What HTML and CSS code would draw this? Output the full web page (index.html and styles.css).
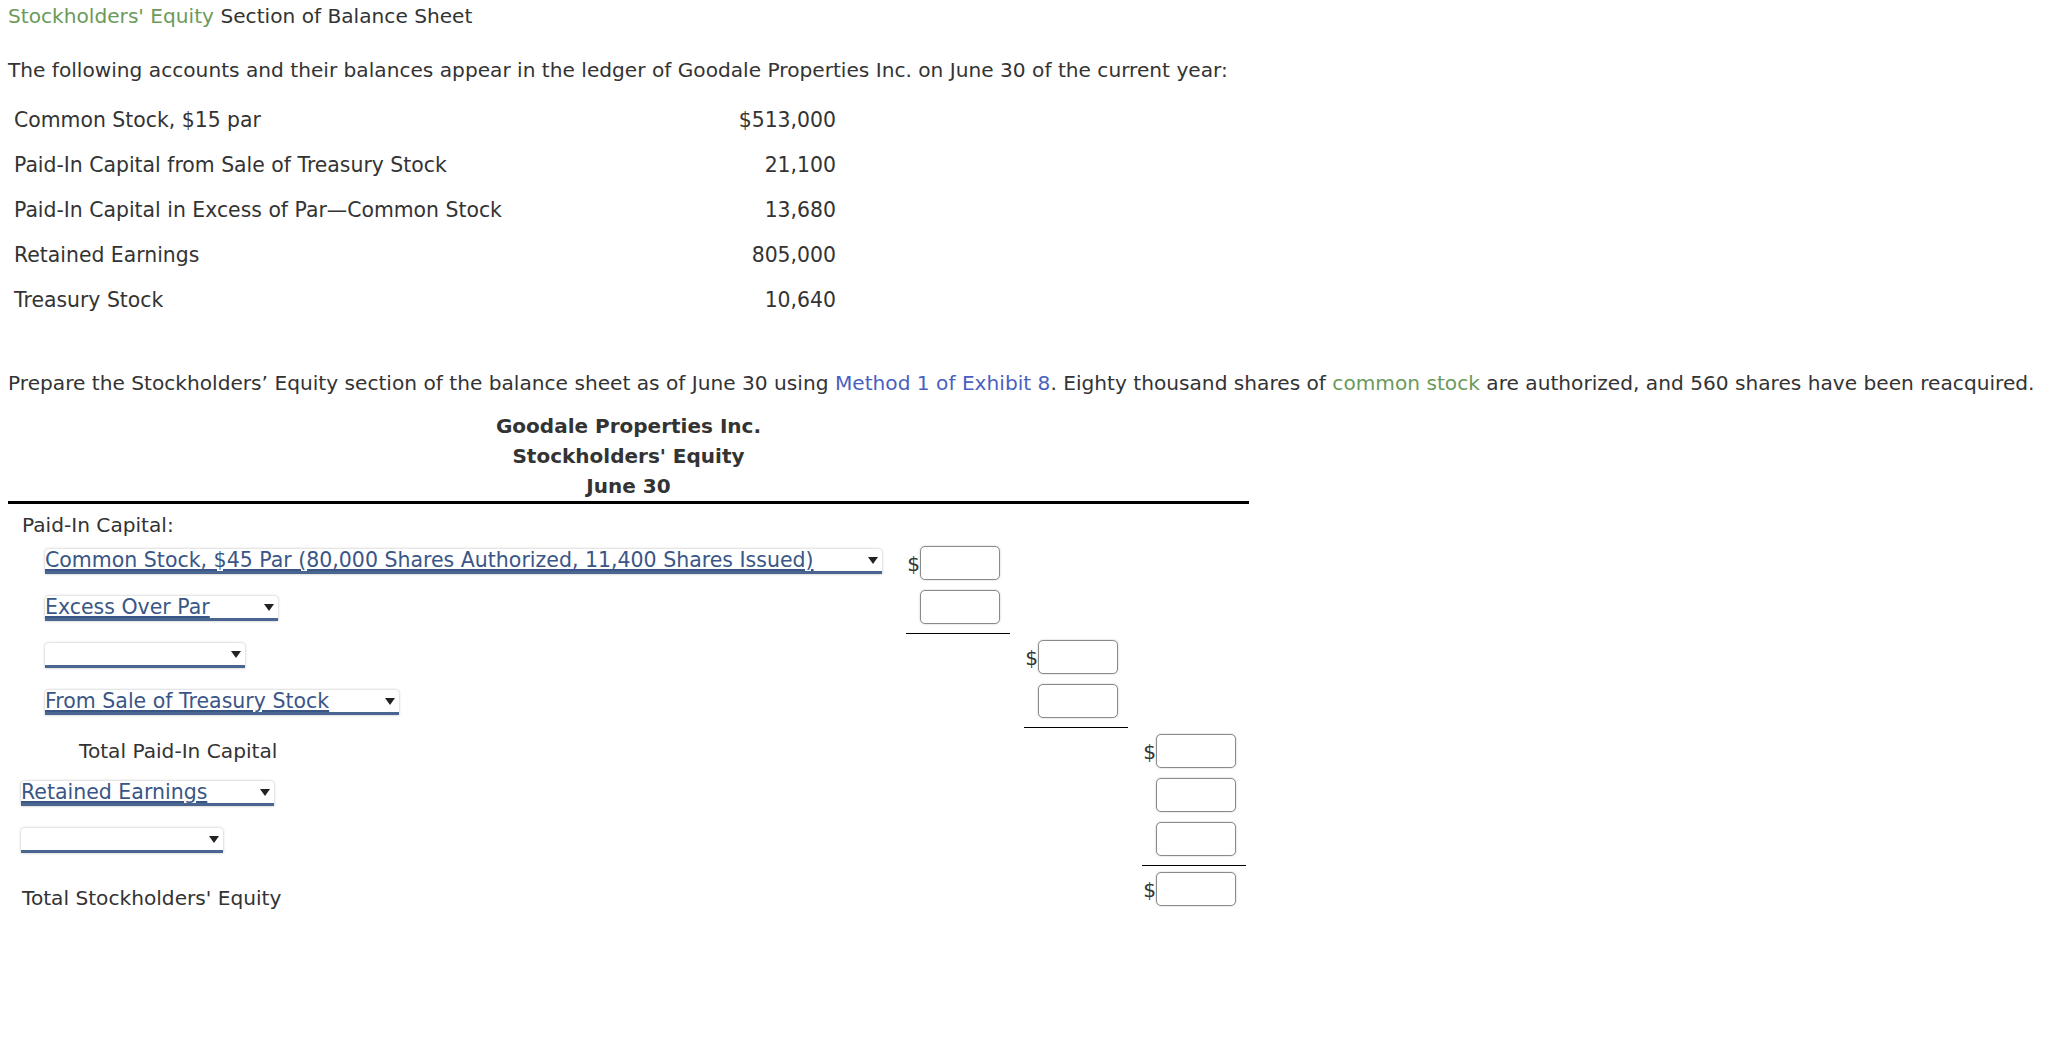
FILE: index.html
```html
<!DOCTYPE html>
<html lang="en">
<head>
<meta charset="utf-8">
<title>Stockholders' Equity Section of Balance Sheet</title>
<link rel="stylesheet" href="styles.css">
</head>
<body>
<div class="page">
  <div class="title"><span class="green">Stockholders' Equity</span> Section of Balance Sheet</div>
  <p class="intro">The following accounts and their balances appear in the ledger of Goodale Properties Inc. on June 30 of the current year:</p>
  <div class="ledger">
    <div class="lrow"><span>Common Stock, $15 par</span><span>$513,000</span></div>
    <div class="lrow"><span>Paid-In Capital from Sale of Treasury Stock</span><span>21,100</span></div>
    <div class="lrow"><span>Paid-In Capital in Excess of Par—Common Stock</span><span>13,680</span></div>
    <div class="lrow"><span>Retained Earnings</span><span>805,000</span></div>
    <div class="lrow"><span>Treasury Stock</span><span>10,640</span></div>
  </div>
  <p class="prompt">Prepare the Stockholders’ Equity section of the balance sheet as of June 30 using <span class="blue">Method 1 of Exhibit 8</span>. Eighty thousand shares of <span class="green">common stock</span> are authorized, and 560 shares have been reacquired.</p>

  <div class="sheet">
    <div class="sheet-head">
      <div>Goodale Properties Inc.</div>
      <div>Stockholders' Equity</div>
      <div>June 30</div>
    </div>
    <div class="section">Paid-In Capital:</div>

    <div class="row">
      <div class="label ind2"><span class="dd dd-cs"><span class="dd-text">Common Stock, $45 Par (80,000 Shares Authorized, 11,400 Shares Issued)</span><svg class="arrow" viewBox="0 0 10 7" width="10" height="7"><path d="M0 0H10L5 7Z"/></svg></span></div>
      <div class="amt"><div class="cell"><span class="cur">$</span><span class="box"></span></div></div>
      <div class="amt"></div>
      <div class="amt"></div>
    </div>

    <div class="row tall">
      <div class="label ind2"><span class="dd dd-ex"><span class="dd-text">Excess Over Par</span><svg class="arrow" viewBox="0 0 10 7" width="10" height="7"><path d="M0 0H10L5 7Z"/></svg></span></div>
      <div class="amt"><div class="cell ul"><span class="cur"></span><span class="box"></span></div></div>
      <div class="amt"></div>
      <div class="amt"></div>
    </div>

    <div class="row">
      <div class="label ind2"><span class="dd dd-b1"><span class="dd-text"></span><svg class="arrow" viewBox="0 0 10 7" width="10" height="7"><path d="M0 0H10L5 7Z"/></svg></span></div>
      <div class="amt"></div>
      <div class="amt"><div class="cell"><span class="cur">$</span><span class="box"></span></div></div>
      <div class="amt"></div>
    </div>

    <div class="row tall">
      <div class="label ind2"><span class="dd dd-ts"><span class="dd-text">From Sale of Treasury Stock</span><svg class="arrow" viewBox="0 0 10 7" width="10" height="7"><path d="M0 0H10L5 7Z"/></svg></span></div>
      <div class="amt"></div>
      <div class="amt"><div class="cell ul"><span class="cur"></span><span class="box"></span></div></div>
      <div class="amt"></div>
    </div>

    <div class="row">
      <div class="label ind3">Total Paid-In Capital</div>
      <div class="amt"></div>
      <div class="amt"></div>
      <div class="amt"><div class="cell"><span class="cur">$</span><span class="box"></span></div></div>
    </div>

    <div class="row">
      <div class="label ind1"><span class="dd dd-re"><span class="dd-text">Retained Earnings</span><svg class="arrow" viewBox="0 0 10 7" width="10" height="7"><path d="M0 0H10L5 7Z"/></svg></span></div>
      <div class="amt"></div>
      <div class="amt"></div>
      <div class="amt"><div class="cell"><span class="cur"></span><span class="box"></span></div></div>
    </div>

    <div class="row tall">
      <div class="label ind1"><span class="dd dd-b2"><span class="dd-text"></span><svg class="arrow" viewBox="0 0 10 7" width="10" height="7"><path d="M0 0H10L5 7Z"/></svg></span></div>
      <div class="amt"></div>
      <div class="amt"></div>
      <div class="amt"><div class="cell ul"><span class="cur"></span><span class="box"></span></div></div>
    </div>

    <div class="row last">
      <div class="label total">Total Stockholders' Equity</div>
      <div class="amt"></div>
      <div class="amt"></div>
      <div class="amt"><div class="cell dbl"><span class="cur">$</span><span class="box"></span></div></div>
    </div>
  </div>
</div>
</body>
</html>
```

FILE: styles.css
```css
html, body {
  margin: 0;
  padding: 0;
  background: #fff;
}

.page {
  padding-left: 8px;
  font-family: Verdana, "DejaVu Sans", sans-serif;
  font-size: 20.15px;
  color: #333;
}

.green { color: #6b9a5a; }
.blue { color: #4a5fc1; }

.title {
  height: 32px;
  line-height: 32px;
}

.intro {
  margin: 22px 0 0;
  line-height: 32px;
}

.ledger {
  margin-top: 12px;
  width: 822px;
  padding: 0 6px;
  font-size: 20.4px;
}

.lrow {
  display: flex;
  justify-content: space-between;
  height: 45px;
  line-height: 45px;
}

.prompt {
  margin: 44px 0 0;
  line-height: 32px;
  white-space: nowrap;
}

.sheet {
  width: 1241px;
  margin-top: 12px;
}

.sheet-head {
  text-align: center;
  font-weight: bold;
  font-size: 20px;
  line-height: 30px;
  border-bottom: 3px solid #000;
}

.section {
  padding-left: 14px;
  height: 37px;
  line-height: 42px;
}

.row {
  display: grid;
  grid-template-columns: 898px 118px 118px 107px;
  height: 44px;
}

.row.tall { height: 50px; }

.label {
  display: flex;
  align-items: center;
  white-space: nowrap;
}

.ind1 { padding-left: 13px; }
.ind2 { padding-left: 37px; }
.ind3 { padding-left: 71px; }

.total {
  padding-left: 14px;
  align-items: flex-start;
  padding-top: 16px;
  line-height: 30px;
}

.dd {
  display: flex;
  align-items: center;
  justify-content: space-between;
  box-sizing: border-box;
  height: 25px;
  background: #fff;
  border-bottom: 3px solid #4b6591;
  border-radius: 4px 4px 0 0;
  box-shadow: 0 0 3px rgba(0, 0, 0, 0.28);
  color: #3a5686;
  margin-top: -3px;
  font-size: 20.5px;
}

.dd-text {
  text-decoration: underline;
  text-underline-offset: 2px;
  line-height: 22px;
}

.arrow {
  fill: #222;
  margin-right: 4px;
  flex: none;
}

.dd-cs { width: 837px; }
.dd-ex { width: 233px; }
.dd-b1 { width: 200px; }
.dd-ts { width: 354px; }
.dd-re { width: 253px; }
.dd-b2 { width: 202px; }

.cell {
  display: flex;
  width: 104px;
  padding-top: 5px;
}

.cell.ul {
  padding-bottom: 9px;
  border-bottom: 1px solid #000;
}

.cell.dbl {
  padding-bottom: 9px;
  border-bottom: 5px double #000;
}

.cur {
  width: 14px;
  text-align: right;
  line-height: 36px;
  color: #333;
}

.box {
  display: block;
  box-sizing: border-box;
  width: 80px;
  height: 34px;
  border: 1px solid #8a8a8a;
  border-radius: 5px;
  box-shadow: 0 0 2px rgba(0, 0, 0, 0.25);
  background: #fff;
}
```
